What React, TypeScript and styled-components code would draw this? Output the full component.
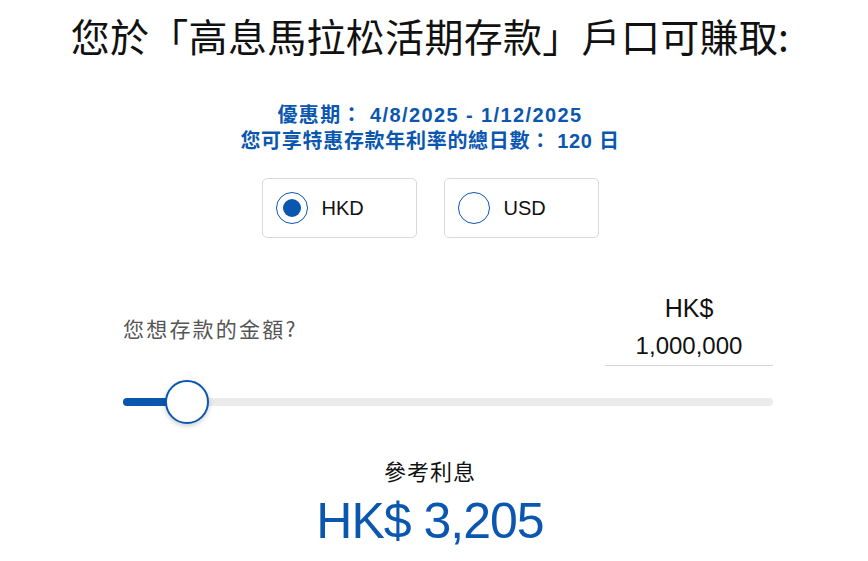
import { useState } from 'react';
import styled, { createGlobalStyle } from 'styled-components';

const BLUE = '#0b57b0';

const GlobalStyle = createGlobalStyle`
  html, body {
    margin: 0;
    padding: 0;
    background: #fff;
  }
  body {
    font-family: 'Liberation Sans', 'Noto Sans CJK TC', Arial, sans-serif;
    color: #111;
  }
`;

const Page = styled.div`
  width: 860px;
  display: flex;
  flex-direction: column;
  align-items: center;
`;

const Title = styled.h1`
  margin: 0;
  padding-top: 11px;
  font-size: 39px;
  line-height: 48px;
  font-weight: 400;
  letter-spacing: 0.3px;
  font-family: 'Noto Sans CJK TC', 'Liberation Sans', sans-serif;
  color: #111;
  white-space: nowrap;
`;

const Promo = styled.div`
  margin-top: 43px;
  text-align: center;
  color: ${BLUE};
  font-size: 20px;
  font-weight: 700;
  line-height: 26px;
  letter-spacing: 0.7px;
  font-family: 'Liberation Sans', 'Noto Sans CJK TC', sans-serif;
`;

const PromoDates = styled.div`
  letter-spacing: 1.4px;
`;

const CurrencyRow = styled.div`
  margin-top: 24px;
  display: flex;
  gap: 27px;
`;

const CurrencyCard = styled.label`
  width: 155px;
  height: 60px;
  box-sizing: border-box;
  border: 1px solid #d8d8d8;
  border-radius: 5px;
  display: flex;
  align-items: center;
  padding-left: 13px;
  gap: 14px;
  cursor: pointer;
  font-size: 20px;
  color: #111;
`;

const RadioCircle = styled.span<{ $checked: boolean }>`
  width: 32px;
  height: 32px;
  box-sizing: border-box;
  border: 1.5px solid ${BLUE};
  border-radius: 50%;
  display: flex;
  align-items: center;
  justify-content: center;
  &::after {
    content: '';
    width: 18px;
    height: 18px;
    border-radius: 50%;
    background: ${({ $checked }) => ($checked ? BLUE : 'transparent')};
  }
`;

const AmountSection = styled.div`
  align-self: flex-start;
  margin-top: 55px;
  margin-left: 123px;
  width: 650px;
  display: flex;
  flex-direction: column;
`;

const AmountRow = styled.div`
  display: flex;
  justify-content: space-between;
  align-items: flex-start;
`;

const AmountLabel = styled.div`
  margin-top: 20px;
  font-size: 21px;
  color: #555;
  font-family: 'Noto Sans CJK TC', 'Liberation Sans', sans-serif;
  letter-spacing: 2.2px;
`;

const AmountBox = styled.div`
  width: 168px;
  display: flex;
  flex-direction: column;
  align-items: center;
  border-bottom: 1px solid #d6d6d6;
  color: #111;
`;

const Currency = styled.div`
  font-size: 25px;
  line-height: 30px;
`;

const AmountValue = styled.div`
  margin-top: 8px;
  font-size: 24px;
  line-height: 30px;
  padding-bottom: 4px;
`;

const SliderTrack = styled.div`
  margin-top: 32px;
  position: relative;
  height: 8px;
  border-radius: 4px;
  background: #ebebeb;
`;

const SliderFill = styled.div`
  position: absolute;
  left: 0;
  top: 0;
  bottom: 0;
  border-radius: 4px;
  background: ${BLUE};
`;

const SliderThumb = styled.div`
  position: absolute;
  top: 50%;
  width: 44px;
  height: 44px;
  box-sizing: border-box;
  margin-left: -22px;
  margin-top: -22px;
  border-radius: 50%;
  background: #fff;
  border: 2px solid ${BLUE};
  box-shadow: 0 2px 5px rgba(0, 0, 0, 0.2);
`;

const Result = styled.div`
  margin-top: 49px;
  display: flex;
  flex-direction: column;
  align-items: center;
`;

const ResultLabel = styled.div`
  font-size: 22px;
  line-height: 30px;
  font-family: 'Noto Sans CJK TC', 'Liberation Sans', sans-serif;
  letter-spacing: 1px;
  color: #111;
`;

const ResultValue = styled.div`
  margin-top: 8px;
  font-size: 50px;
  line-height: 56px;
  color: ${BLUE};
  letter-spacing: -1px;
`;

const currencies = ['HKD', 'USD'];

const App = () => {
  const [currency, setCurrency] = useState('HKD');
  const fillWidth = 64;

  return (
    <Page>
      <GlobalStyle />
      <Title>您於「高息馬拉松活期存款」戶口可賺取:</Title>
      <Promo>
        <PromoDates>優惠期： 4/8/2025 - 1/12/2025</PromoDates>
        <div>您可享特惠存款年利率的總日數： 120 日</div>
      </Promo>
      <CurrencyRow>
        {currencies.map((c) => (
          <CurrencyCard key={c} onClick={() => setCurrency(c)}>
            <RadioCircle $checked={currency === c} />
            {c}
          </CurrencyCard>
        ))}
      </CurrencyRow>
      <AmountSection>
        <AmountRow>
          <AmountLabel>您想存款的金額?</AmountLabel>
          <AmountBox>
            <Currency>HK$</Currency>
            <AmountValue>1,000,000</AmountValue>
          </AmountBox>
        </AmountRow>
        <SliderTrack>
          <SliderFill style={{ width: fillWidth }} />
          <SliderThumb style={{ left: fillWidth }} />
        </SliderTrack>
      </AmountSection>
      <Result>
        <ResultLabel>參考利息</ResultLabel>
        <ResultValue>HK$ 3,205</ResultValue>
      </Result>
    </Page>
  );
};

export default App;
